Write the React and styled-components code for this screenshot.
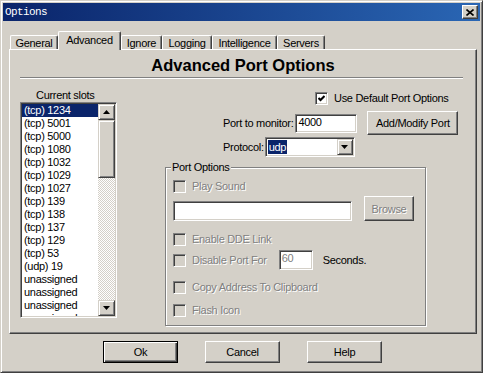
import React from "react";
import styled, { createGlobalStyle } from "styled-components";

// classic dialog palette
const FACE = "#d4d0c8";
const SHADOW = "#808080";
const DARK = "#404040";
const NAVY = "#0a246a";

const slots = [
  "(tcp) 1234",
  "(tcp) 5001",
  "(tcp) 5000",
  "(tcp) 1080",
  "(tcp) 1032",
  "(tcp) 1029",
  "(tcp) 1027",
  "(tcp) 139",
  "(tcp) 138",
  "(tcp) 137",
  "(tcp) 129",
  "(tcp) 53",
  "(udp) 19",
  "unassigned",
  "unassigned",
  "unassigned",
  "unassigned",
];

const tabs = [
  { name: "General", width: 48 },
  { name: "Advanced", width: 63, active: true },
  { name: "Ignore", width: 41 },
  { name: "Logging", width: 50 },
  { name: "Intelligence", width: 65 },
  { name: "Servers", width: 48 },
];

const portOptions = [
  { label: "Enable DDE Link", top: 12 },
];

const GlobalStyle = createGlobalStyle`
  html, body { margin: 0; padding: 0; background: ${FACE}; }
  body {
    font-family: "Liberation Sans", Arial, sans-serif;
    font-size: 11px;
    letter-spacing: -0.3px;
    color: #000;
  }
  * { box-sizing: border-box; }
`;

const Window = styled.div`
  width: 483px;
  height: 373px;
  background: ${FACE};
  border: 1px solid;
  border-color: ${FACE} ${DARK} ${DARK} ${FACE};
  box-shadow: inset 1px 1px #fff, inset -1px -1px ${SHADOW};
  padding: 2px;
  display: flex;
  flex-direction: column;
`;

const TitleBar = styled.div`
  height: 18px;
  background: linear-gradient(to right, #0a246a, #2a66b4);
  display: flex;
  align-items: center;
  justify-content: space-between;
  padding: 0 2px 0 2px;
`;

const Title = styled.span`
  color: #fff;
  font-family: "Liberation Mono", monospace;
  font-size: 11px;
  letter-spacing: -0.6px;
`;

const CloseBox = styled.div`
  width: 16px;
  height: 14px;
  background: ${FACE};
  border: 1px solid;
  border-color: #fff ${DARK} ${DARK} #fff;
  box-shadow: inset -1px -1px ${SHADOW};
  display: flex;
  align-items: center;
  justify-content: center;
`;

const Body = styled.div`
  padding-left: 6px;
  display: flex;
  flex-direction: column;
`;

const TabStrip = styled.div`
  margin-top: 10px;
  height: 18px;
  display: flex;
  align-items: flex-end;
  padding-left: 1px;
`;

const Tab = styled.div`
  position: relative;
  z-index: ${(p) => (p.$active ? 1 : 0)};
  width: ${(p) => p.$width}px;
  height: ${(p) => (p.$active ? 19 : 14)}px;
  margin-bottom: ${(p) => (p.$active ? -1 : 0)}px;
  padding-bottom: ${(p) => (p.$active ? 2 : 0)}px;
  background: ${FACE};
  border-top: 1px solid #fff;
  border-left: 1px solid #fff;
  border-right: 1px solid ${DARK};
  border-radius: 2px 2px 0 0;
  box-shadow: inset -1px 0 ${SHADOW};
  display: flex;
  align-items: center;
  justify-content: center;
`;

const Panel = styled.div`
  width: 468px;
  height: 285px;
  border: 1px solid;
  border-color: #fff ${DARK} ${DARK} #fff;
  box-shadow: inset -1px -1px ${SHADOW};
  display: flex;
  flex-direction: column;
`;

const Heading = styled.div`
  margin-top: 5px;
  line-height: 20px;
  text-align: center;
  font-size: 16.5px;
  font-weight: bold;
  letter-spacing: 0;
`;

const Separator = styled.div`
  margin: 2px 0 0 10px;
  width: 443px;
  height: 2px;
  border-top: 1px solid ${SHADOW};
  border-bottom: 1px solid #fff;
`;

const Columns = styled.div`
  display: flex;
  padding-left: 10px;
`;

const SlotsColumn = styled.div`
  width: 97px;
  display: flex;
  flex-direction: column;
`;

const ColumnLabel = styled.div`
  margin-top: 10px;
  line-height: 13px;
  padding-left: 16px;
`;

const Sunken = styled.div`
  border: 1px solid;
  border-color: ${SHADOW} #fff #fff ${SHADOW};
  box-shadow: inset 1px 1px ${DARK}, inset -1px -1px ${FACE};
  padding: 1px;
  background: #fff;
`;

const ListBox = styled(Sunken)`
  height: 216px;
  display: flex;
`;

const Items = styled.div`
  flex: 1;
  overflow: hidden;
`;

const Item = styled.div`
  line-height: 13px;
  padding-left: 2px;
  white-space: nowrap;
  background: ${(p) => (p.$selected ? NAVY : "transparent")};
  color: ${(p) => (p.$selected ? "#fff" : "#000")};
`;

const ScrollBar = styled.div`
  width: 17px;
  display: flex;
  flex-direction: column;
`;

const Raised = styled.div`
  background: ${FACE};
  border: 1px solid;
  border-color: ${FACE} ${DARK} ${DARK} ${FACE};
  box-shadow: inset 1px 1px #fff, inset -1px -1px ${SHADOW};
`;

const ScrollButton = styled(Raised)`
  height: 16px;
  display: flex;
  align-items: center;
  justify-content: center;
`;

const Thumb = styled(Raised)`
  height: 58px;
`;

const Track = styled.div`
  flex: 1;
  background: repeating-conic-gradient(#fff 0 25%, ${FACE} 0 50%) 0 0 / 2px 2px;
`;

const OptionsColumn = styled.div`
  margin-left: 48px;
  width: 298px;
  display: flex;
  flex-direction: column;
`;

const Row = styled.div`
  display: flex;
  align-items: ${(p) => p.$align || "center"};
  margin-top: ${(p) => p.$top || 0}px;
  padding-left: ${(p) => p.$indent || 0}px;
`;

const CheckBox = styled(Sunken)`
  width: 13px;
  height: 13px;
  flex: none;
  background: ${(p) => (p.$disabled ? FACE : "#fff")};
  display: flex;
  align-items: center;
  justify-content: center;
`;

const Label = styled.span`
  margin-left: ${(p) => p.$gap || 0}px;
  line-height: 13px;
  white-space: nowrap;
  color: ${(p) => (p.$disabled ? SHADOW : "#000")};
  text-shadow: ${(p) => (p.$disabled ? "1px 1px 0 #fff" : "none")};
`;

const Field = styled(Sunken)`
  width: ${(p) => p.$width}px;
  height: ${(p) => p.$height || 20}px;
  margin-left: ${(p) => p.$gap || 0}px;
  padding: 1px 2px;
  line-height: 13px;
  color: ${(p) => (p.$disabled ? SHADOW : "#000")};
`;

const Combo = styled(Sunken)`
  width: 90px;
  height: 20px;
  margin-left: 1px;
  display: flex;
  align-items: center;
  justify-content: space-between;
`;

const ComboText = styled.span`
  background: ${NAVY};
  color: #fff;
  line-height: 14px;
  padding: 0 1px;
  margin-left: 1px;
`;

const ComboButton = styled(ScrollButton)`
  width: 16px;
`;

const Button = styled.div`
  width: ${(p) => p.$width || 75}px;
  height: ${(p) => p.$height || 22}px;
  margin-left: ${(p) => p.$gap || 0}px;
  background: ${FACE};
  border: 1px solid;
  border-color: ${(p) =>
    p.$default ? "#000" : `#fff ${DARK} ${DARK} #fff`};
  box-shadow: ${(p) =>
    p.$default
      ? `inset 1px 1px #fff, inset -1px -1px ${DARK}, inset -2px -2px ${SHADOW}`
      : `inset -1px -1px ${SHADOW}`};
  display: flex;
  align-items: center;
  justify-content: center;
  color: ${(p) => (p.$disabled ? SHADOW : "#000")};
  text-shadow: ${(p) => (p.$disabled ? "1px 1px 0 #fff" : "none")};
`;

const GroupBox = styled.div`
  position: relative;
  margin-top: 10px;
  width: 261px;
  height: 159px;
  border: 1px solid ${SHADOW};
  box-shadow: 1px 1px 0 #fff, inset 1px 1px 0 #fff;
  padding: 12px 0 0 7px;
  display: flex;
  flex-direction: column;
`;

const GroupCaption = styled.span`
  position: absolute;
  top: -7px;
  left: 5px;
  padding: 0 1px;
  line-height: 13px;
  background: ${FACE};
`;

const ButtonRow = styled.div`
  display: flex;
  margin-top: 7px;
  padding-left: 100px;
`;

const Arrow = ({ up }) => (
  <svg width="7" height="4" viewBox="0 0 7 4">
    <path d={up ? "M3.5 0 L7 4 L0 4 Z" : "M0 0 L7 0 L3.5 4 Z"} fill="#000" />
  </svg>
);

const Check = () => (
  <svg width="7" height="7" viewBox="0 0 7 7">
    <path d="M0.5 3 L2.5 5 L6.5 1" stroke="#000" strokeWidth="2" fill="none" />
  </svg>
);

const CloseGlyph = () => (
  <svg width="8" height="7" viewBox="0 0 8 7">
    <path d="M0.5 0.5 L7.5 6.5 M7.5 0.5 L0.5 6.5" stroke="#000" strokeWidth="1.6" />
  </svg>
);

const OptionCheck = ({ label, top }) => (
  <Row $top={top}>
    <CheckBox $disabled />
    <Label $gap={6} $disabled>
      {label}
    </Label>
  </Row>
);

const App = () => {
  return (
    <>
      <GlobalStyle />
      <Window>
        <TitleBar>
          <Title>Options</Title>
          <CloseBox>
            <CloseGlyph />
          </CloseBox>
        </TitleBar>

        <Body>
          <TabStrip>
            {tabs.map((t) => (
              <Tab key={t.name} $width={t.width} $active={t.active}>
                {t.name}
              </Tab>
            ))}
          </TabStrip>

          <Panel>
            <Heading>Advanced Port Options</Heading>
            <Separator />

            <Columns>
              <SlotsColumn>
                <ColumnLabel>Current slots</ColumnLabel>
                <ListBox>
                  <Items>
                    {slots.map((s, i) => (
                      <Item key={i} $selected={i === 0}>
                        {s}
                      </Item>
                    ))}
                  </Items>
                  <ScrollBar>
                    <ScrollButton>
                      <Arrow up />
                    </ScrollButton>
                    <Thumb />
                    <Track />
                    <ScrollButton>
                      <Arrow />
                    </ScrollButton>
                  </ScrollBar>
                </ListBox>
              </SlotsColumn>
              {/* End slots */}

              <OptionsColumn>
                <Row $top={13} $indent={150}>
                  <CheckBox>
                    <Check />
                  </CheckBox>
                  <Label $gap={6}>Use Default Port Options</Label>
                </Row>

                <Row $top={6} $indent={58}>
                  <Label>Port to monitor:</Label>
                  <Field $width={62} $height={19} $gap={2}>
                    4000
                  </Field>
                  <Button $width={91} $height={24} $gap={10}>
                    Add/Modify Port
                  </Button>
                </Row>

                <Row $top={2} $indent={58}>
                  <Label>Protocol:</Label>
                  <Combo>
                    <ComboText>udp</ComboText>
                    <ComboButton>
                      <Arrow />
                    </ComboButton>
                  </Combo>
                </Row>

                <GroupBox>
                  <GroupCaption>Port Options</GroupCaption>
                  <OptionCheck label="Play Sound" />
                  <Row $top={3} $align="flex-end">
                    <Field $width={179} />
                    <Button $width={50} $height={25} $gap={12} $disabled>
                      Browse
                    </Button>
                  </Row>
                  {portOptions.map((o) => (
                    <OptionCheck key={o.label} label={o.label} top={o.top} />
                  ))}
                  <Row $top={4}>
                    <CheckBox $disabled />
                    <Label $gap={6} $disabled>
                      Disable Port For
                    </Label>
                    <Field $width={34} $gap={12} $disabled>
                      60
                    </Field>
                    <Label $gap={10}>Seconds.</Label>
                  </Row>
                  <OptionCheck label="Copy Address To Clipboard" top={11} />
                  <OptionCheck label="Flash Icon" top={10} />
                </GroupBox>
              </OptionsColumn>
            </Columns>
          </Panel>
          {/* End panel */}
        </Body>

        <ButtonRow>
          <Button $default>Ok</Button>
          <Button $gap={27}>Cancel</Button>
          <Button $gap={27}>Help</Button>
        </ButtonRow>
      </Window>
    </>
  );
};

export default App;
